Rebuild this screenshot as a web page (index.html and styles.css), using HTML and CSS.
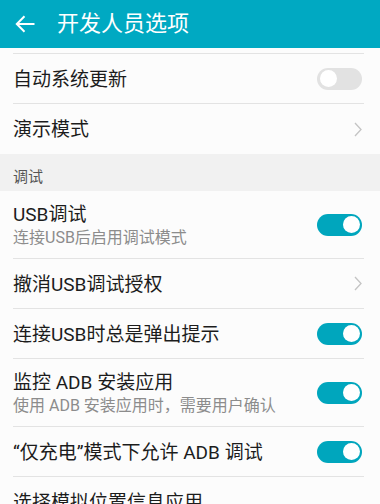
FILE: index.html
```html
<!DOCTYPE html>
<html lang="zh-CN">
<head>
<meta charset="utf-8">
<link rel="stylesheet" href="styles.css">
</head>
<body>
<div class="screen">
  <header class="appbar">
    <svg class="back" width="20" height="18" viewBox="0 0 20 18"><path d="M19.5 9H1.8M9.5 1.3L1.8 9l7.7 7.7" fill="none" stroke="#fff" stroke-width="2"/></svg>
    <div class="appbar-title">开发人员选项</div>
  </header>
  <div class="list">
    <div class="row-cut"></div>
    <div class="row"><div class="text"><div class="title">自动系统更新</div></div><span class="toggle"></span></div>
    <div class="row last"><div class="text"><div class="title">演示模式</div></div><svg class="chev" width="8" height="15" viewBox="0 0 8 15"><path d="M1 1l6 6.5L1 14" fill="none" stroke="#c4c4c4" stroke-width="1.3"/></svg></div>
  </div>
  <div class="section">调试</div>
  <div class="list">
    <div class="row two"><div class="text"><div class="title">USB调试</div><div class="sub">连接USB后启用调试模式</div></div><span class="toggle on"></span></div>
    <div class="row"><div class="text"><div class="title">撤消USB调试授权</div></div><svg class="chev" width="8" height="15" viewBox="0 0 8 15"><path d="M1 1l6 6.5L1 14" fill="none" stroke="#c4c4c4" stroke-width="1.3"/></svg></div>
    <div class="row"><div class="text"><div class="title">连接USB时总是弹出提示</div></div><span class="toggle on"></span></div>
    <div class="row two"><div class="text"><div class="title">监控 ADB 安装应用</div><div class="sub">使用 ADB 安装应用时，需要用户确认</div></div><span class="toggle on"></span></div>
    <div class="row"><div class="text"><div class="title">“仅充电”模式下允许 ADB 调试</div></div><span class="toggle on"></span></div>
    <div class="row"><div class="text"><div class="title">选择模拟位置信息应用</div></div></div>
  </div>
</div>
</body>
</html>
```
FILE: styles.css
```css
html, body {
  margin: 0;
  padding: 0;
}
body {
  width: 380px;
  height: 504px;
  overflow: hidden;
  background: #fcfcfc;
  font-family: Roboto, "Noto Sans CJK SC", sans-serif;
  color: #1c1c1c;
}
.screen {
  display: flex;
  flex-direction: column;
}
.appbar {
  height: 48px;
  background: #00a9c2;
  display: flex;
  align-items: center;
  padding-left: 15px;
  gap: 22px;
  flex-shrink: 0;
}
.back {
  display: block;
}
.appbar-title {
  color: #fff;
  font-size: 22px;
  line-height: 28px;
}
.list {
  background: #fcfcfc;
}
.row-cut {
  height: 5px;
  margin: 0 16px 0 13px;
  border-bottom: 1px solid #e3e3e3;
}
.row {
  display: flex;
  align-items: center;
  margin: 0 16px 0 13px;
  height: 49px;
  border-bottom: 1px solid #e3e3e3;
}
.row.last {
  border-bottom: none;
  height: 50px;
}
.row.two {
  height: 67px;
}
.text {
  flex: 1;
  min-width: 0;
  padding-top: 2px;
}
.title {
  font-size: 19px;
  line-height: 24px;
  white-space: nowrap;
}
.sub {
  font-size: 16px;
  line-height: 22px;
  color: #8c8c8c;
  white-space: nowrap;
}
.section {
  height: 37px;
  box-sizing: border-box;
  background: #f1f1f1;
  padding: 13px 0 0 13px;
  font-size: 15px;
  line-height: 20px;
  color: #555;
}
.toggle {
  position: relative;
  width: 45px;
  height: 22px;
  border-radius: 11px;
  background: #e2e2e2;
  margin-right: 2px;
  flex-shrink: 0;
}
.toggle::after {
  content: "";
  position: absolute;
  top: 2.5px;
  left: 2.5px;
  width: 17px;
  height: 17px;
  border-radius: 50%;
  background: #fff;
}
.toggle.on {
  background: #00a6bd;
}
.toggle.on::after {
  left: auto;
  right: 2px;
}
.chev {
  display: block;
  margin-right: 2px;
  flex-shrink: 0;
}
```
